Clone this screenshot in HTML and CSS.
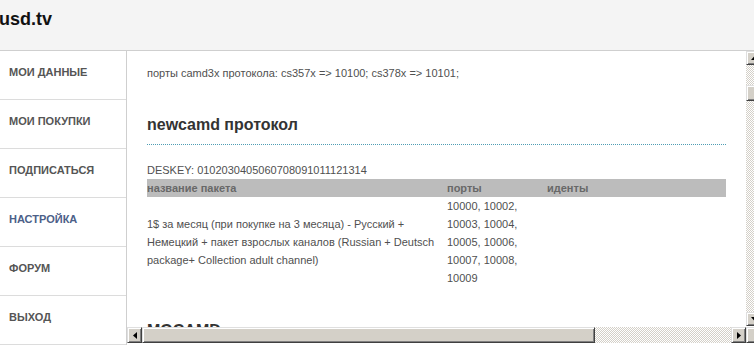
FILE: index.html
```html
<!DOCTYPE html>
<html lang="ru">
<head>
  <meta charset="UTF-8" />
  <title>usd.tv</title>
  <link rel="stylesheet" href="styles.css">
</head>
<body>
  <header class="top">
    <span class="logo">usd.tv</span>
  </header>

  <div class="layout">
    <nav class="menu">
      <a href="#">Мои данные</a>
      <a href="#">Мои покупки</a>
      <a href="#">Подписаться</a>
      <a href="#" class="active">Настройка</a>
      <a href="#">Форум</a>
      <a href="#">Выход</a>
    </nav>

    <div class="frame">
      <div class="frame-row">
        <div class="view">
          <p class="first">порты camd3x протокола: cs357x =&gt; 10100; cs378x =&gt; 10101;</p>

          <h2>newcamd протокол</h2>
          <p>DESKEY: 0102030405060708091011121314</p>
          <table class="packs">
            <tr>
              <th class="col-name">название пакета</th>
              <th class="col-ports">порты</th>
              <th>иденты</th>
            </tr>
            <tr>
              <td class="col-name">1$ за месяц (при покупке на 3 месяца) - Русский + Немецкий + пакет взрослых каналов (Russian + Deutsch package+ Collection adult channel)</td>
              <td class="col-ports">10000, 10002, 10003, 10004, 10005, 10006, 10007, 10008, 10009</td>
              <td></td>
            </tr>
          </table>

          <h2 class="next">MGCAMD</h2>
        </div>

        <div class="vscroll">
          <div class="btn up">
            <svg width="7" height="4" viewBox="0 0 7 4"><polygon points="3.5,0 7,4 0,4" fill="#000"/></svg>
          </div>
          <div class="track vtrack">
            <div class="thumb vthumb"></div>
          </div>
          <div class="btn down">
            <svg width="7" height="4" viewBox="0 0 7 4"><polygon points="0,0 7,0 3.5,4" fill="#000"/></svg>
          </div>
        </div>
      </div>

      <div class="hscroll">
        <div class="btn side">
          <svg width="4" height="7" viewBox="0 0 4 7"><polygon points="4,0 4,7 0,3.5" fill="#000"/></svg>
        </div>
        <div class="thumb hthumb"></div>
        <div class="track htrack"></div>
        <div class="btn side">
          <svg width="4" height="7" viewBox="0 0 4 7"><polygon points="0,0 4,3.5 0,7" fill="#000"/></svg>
        </div>
        <div class="btn corner"></div>
      </div>
    </div>
  </div>
</body>
</html>
```

FILE: styles.css
```css
html {
  overflow: hidden;
}
body {
  margin: 0;
  width: 762px;
  font-family: "Liberation Sans", Arial, sans-serif;
  font-size: 11px;
  color: #505050;
  background: #fff;
}
.top {
  height: 51px;
  box-sizing: border-box;
  padding-top: 9px;
  background: #f4f4f4;
  border-bottom: 1px solid #cfcfcf;
}
.logo {
  display: block;
  margin-left: -1px;
  font-size: 18px;
  font-weight: bold;
  line-height: 21px;
  color: #111;
}
.layout {
  display: flex;
}
.menu {
  width: 126px;
  border-right: 1px solid #cfcfcf;
  display: flex;
  flex-direction: column;
  flex-shrink: 0;
}
.menu a {
  display: block;
  height: 49px;
  box-sizing: border-box;
  padding: 15px 9px 0;
  border-bottom: 1px solid #dcdcdc;
  font-weight: bold;
  line-height: 13px;
  text-transform: uppercase;
  text-decoration: none;
  color: #555;
}
.menu a.active {
  color: #4c6088;
}
.frame {
  width: 635px;
  flex-shrink: 0;
}
.frame-row {
  display: flex;
  height: 276px;
}
.view {
  width: 619px;
  box-sizing: border-box;
  padding: 0 20px;
  overflow: hidden;
  line-height: 18px;
}
.view p {
  margin: 0;
}
.view p.first {
  margin-top: 13px;
}
.view h2 {
  margin: 33px 0 16px;
  padding-bottom: 10px;
  background: repeating-linear-gradient(to right, #4f9db4 0 1px, transparent 1px 2px) left bottom / 100% 1px no-repeat;
  font-size: 16px;
  line-height: 20px;
  color: #333;
}
.view h2.next {
  margin-top: 34px;
}
.packs {
  width: 100%;
  border-collapse: collapse;
}
.packs th,
.packs td {
  padding: 0;
  text-align: left;
  line-height: 18px;
}
.packs th {
  background: #bcbcbc;
  color: #686868;
}
.packs td {
  vertical-align: top;
}
.packs td.col-name {
  vertical-align: middle;
}
.col-name {
  width: 300px;
}
.col-ports {
  width: 100px;
}

/* classic scrollbars */
.btn,
.thumb {
  box-sizing: border-box;
  background: #d4d0c8;
  border: 1px solid;
  border-color: #dfdfdf #404040 #404040 #dfdfdf;
  box-shadow: inset 1px 1px #fff, inset -1px -1px #808080;
  display: flex;
  align-items: center;
  justify-content: center;
  flex-shrink: 0;
}
.track {
  background: repeating-conic-gradient(#d4d0c8 0 25%, #fff 0 50%) 0 0 / 2px 2px;
}
.vscroll {
  width: 16px;
  display: flex;
  flex-direction: column;
  padding-bottom: 1px;
}
.vscroll .btn {
  height: 14px;
}
.vtrack {
  flex: 1;
  padding-top: 20px;
}
.vthumb {
  height: 16px;
}
.hscroll {
  display: flex;
  height: 16px;
}
.btn.side {
  width: 15px;
}
.hthumb {
  width: 453px;
}
.htrack {
  flex: 1;
}
.btn.corner {
  width: 16px;
}
```
